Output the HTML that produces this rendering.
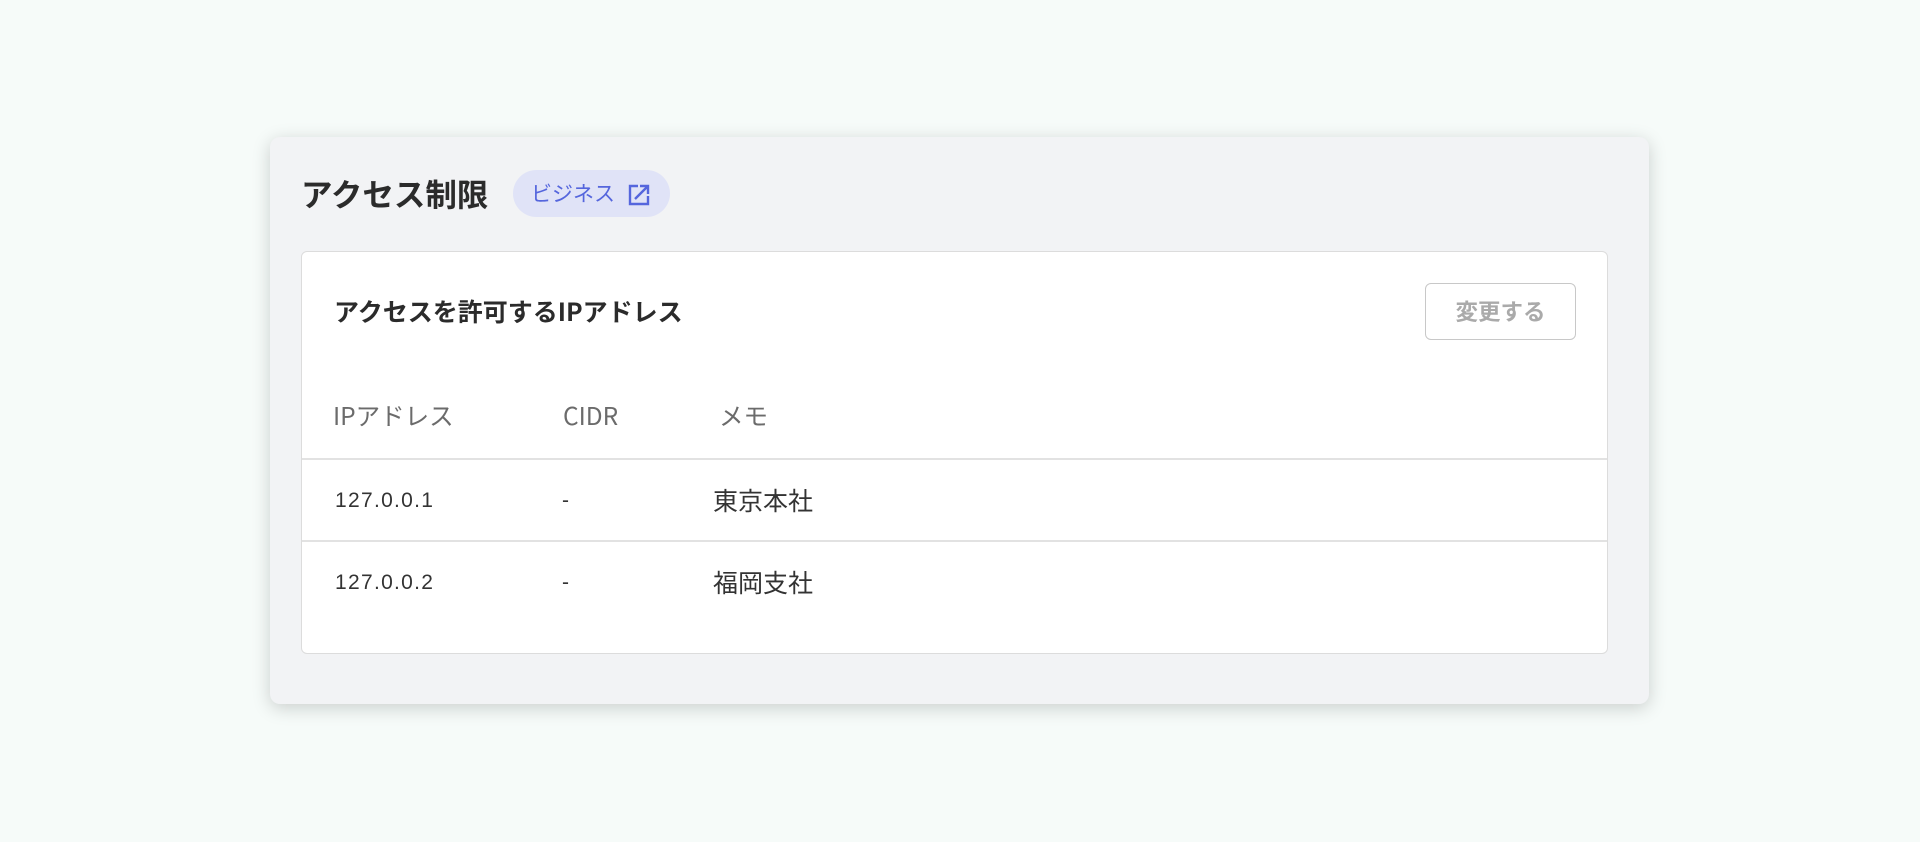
<!DOCTYPE html>
<html><head><meta charset="utf-8"><style>
*{box-sizing:border-box;margin:0;padding:0}
body{width:1920px;height:842px;background:#f6fbf9;font-family:"Liberation Sans","Noto Sans CJK JP",sans-serif;position:relative;overflow:hidden}
.card{position:absolute;left:270px;top:137px;width:1379px;height:567px;background:#f2f3f5;border-radius:10px;box-shadow:0 4px 18px rgba(0,0,0,0.18)}
.title{position:absolute;left:301px;top:173px;font-size:31.5px;font-weight:bold;color:#2b2b2b;font-family:"Noto Sans CJK JP",sans-serif;line-height:40px}
.badge{position:absolute;left:513px;top:170px;width:157px;height:47px;border-radius:24px;background:#e0e3f7;color:#5566dd;font-size:21px;line-height:47px;padding-left:18px;font-family:"Noto Sans CJK JP",sans-serif}
.badge svg{position:absolute;left:114px;top:13px}
.panel{position:absolute;left:301px;top:251px;width:1307px;height:403px;background:#fff;border:1px solid #dcdcdc;border-radius:6px}
.sub{position:absolute;left:32px;top:42px;font-size:25px;font-weight:bold;color:#2b2b2b;font-family:"Noto Sans CJK JP",sans-serif;line-height:34px}
.btn{position:absolute;left:1123px;top:31px;width:151px;height:57px;border:1.5px solid #c8c8c8;border-radius:6px;color:#aaa;font-size:22.5px;text-align:center;line-height:54px;font-weight:bold;font-family:"Noto Sans CJK JP",sans-serif}
.t{position:absolute;font-family:"Noto Sans CJK JP",sans-serif;line-height:30px}
.h{color:#6b6b6b;font-size:24.5px}
.c{color:#333;font-size:21px;letter-spacing:1.3px;font-family:"Liberation Sans",sans-serif}
.m{color:#333;font-size:25px}
.line{position:absolute;left:0;width:100%;height:1.5px;background:#e2e2e2}
</style></head><body>
<div class="card"></div>
<div class="title">アクセス制限</div>
<div class="badge">ビジネス<svg width="24" height="24" viewBox="0 0 24 24" fill="none" stroke="#5566dd" stroke-width="2.4"><path d="M11 3H3v18h18v-8"/><path d="M8 16L21 3M13 3h8v8"/></svg></div>
<div class="panel">
<div class="sub">アクセスを許可するIPアドレス</div>
<div class="btn">変更する</div>
<div class="t h" style="left:31px;top:149px">IPアドレス</div>
<div class="t h" style="left:261px;top:149px">CIDR</div>
<div class="t h" style="left:417px;top:149px">メモ</div>
<div class="line" style="top:206px"></div>
<div class="t c" style="left:33px;top:234px">127.0.0.1</div>
<div class="t c" style="left:260px;top:234px">-</div>
<div class="t m" style="left:411px;top:233px">東京本社</div>
<div class="line" style="top:288px"></div>
<div class="t c" style="left:33px;top:316px">127.0.0.2</div>
<div class="t c" style="left:260px;top:316px">-</div>
<div class="t m" style="left:411px;top:315px">福岡支社</div>
</div>
</body></html>
